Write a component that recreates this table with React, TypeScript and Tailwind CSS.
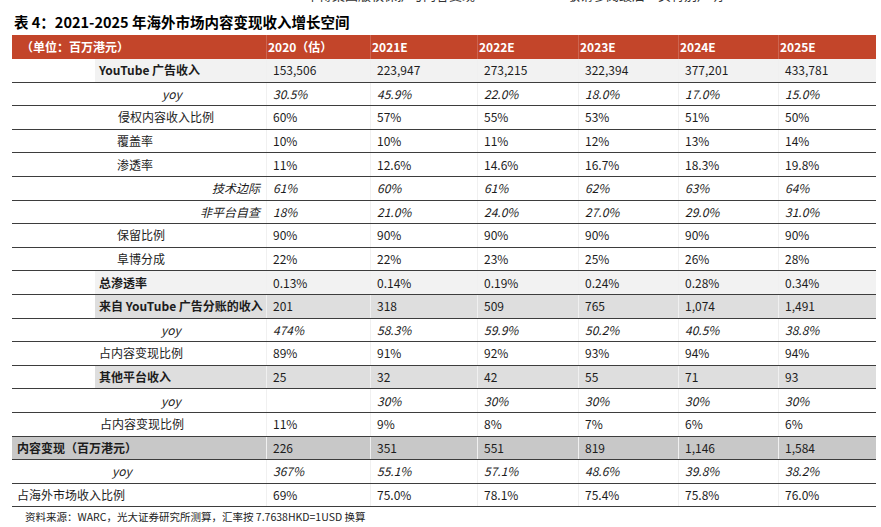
import React from 'react';
import clsx from 'clsx';

type RowData = {
  label: string;
  vals: string[];
  sub?: boolean; // label sits in the second sub-column, shaded from there
  full?: boolean; // shading runs across the whole row
  bg?: string;
  pl?: string;
  right?: boolean;
  bold?: boolean;
  italic?: boolean;
  italicVals?: boolean;
};

const years = ['2020（估）', '2021E', '2022E', '2023E', '2024E', '2025E'];
const colW = ['w-[104px]', 'w-[107px]', 'w-[101px]', 'w-[100px]', 'w-[100px]', 'w-[98px]'];

const rows: RowData[] = [
  { label: 'YouTube 广告收入', sub: true, bold: true, bg: 'bg-[#f2f2f2]', vals: ['153,506', '223,947', '273,215', '322,394', '377,201', '433,781'] },
  { label: 'yoy', pl: 'pl-[150px]', italic: true, italicVals: true, vals: ['30.5%', '45.9%', '22.0%', '18.0%', '17.0%', '15.0%'] },
  { label: '侵权内容收入比例', pl: 'pl-[106px]', vals: ['60%', '57%', '55%', '53%', '51%', '50%'] },
  { label: '覆盖率', pl: 'pl-[105px]', vals: ['10%', '10%', '11%', '12%', '13%', '14%'] },
  { label: '渗透率', pl: 'pl-[105px]', vals: ['11%', '12.6%', '14.6%', '16.7%', '18.3%', '19.8%'] },
  { label: '技术边际', right: true, italic: true, italicVals: true, vals: ['61%', '60%', '61%', '62%', '63%', '64%'] },
  { label: '非平台自查', right: true, italic: true, italicVals: true, vals: ['18%', '21.0%', '24.0%', '27.0%', '29.0%', '31.0%'] },
  { label: '保留比例', pl: 'pl-[105px]', vals: ['90%', '90%', '90%', '90%', '90%', '90%'] },
  { label: '阜博分成', pl: 'pl-[105px]', vals: ['22%', '22%', '23%', '25%', '26%', '28%'] },
  { label: '总渗透率', sub: true, bold: true, bg: 'bg-[#f2f2f2]', vals: ['0.13%', '0.14%', '0.19%', '0.24%', '0.28%', '0.34%'] },
  { label: '来自 YouTube 广告分账的收入', sub: true, bold: true, bg: 'bg-[#dedede]', vals: ['201', '318', '509', '765', '1,074', '1,491'] },
  { label: 'yoy', pl: 'pl-[149px]', italic: true, italicVals: true, vals: ['474%', '58.3%', '59.9%', '50.2%', '40.5%', '38.8%'] },
  { label: '占内容变现比例', pl: 'pl-[87px]', vals: ['89%', '91%', '92%', '93%', '94%', '94%'] },
  { label: '其他平台收入', sub: true, bold: true, bg: 'bg-[#dedede]', vals: ['25', '32', '42', '55', '71', '93'] },
  { label: 'yoy', pl: 'pl-[149px]', italic: true, italicVals: true, vals: ['', '30%', '30%', '30%', '30%', '30%'] },
  { label: '占内容变现比例', pl: 'pl-[88px]', vals: ['11%', '9%', '8%', '7%', '6%', '6%'] },
  { label: '内容变现（百万港元）', full: true, bold: true, pl: 'pl-[5px]', bg: 'bg-[#c8c8c8]', vals: ['226', '351', '551', '819', '1,146', '1,584'] },
  { label: 'yoy', pl: 'pl-[100px]', italic: true, italicVals: true, vals: ['367%', '55.1%', '57.1%', '48.6%', '39.8%', '38.2%'] },
  { label: '占海外市场收入比例', full: true, pl: 'pl-[5px]', vals: ['69%', '75.0%', '78.1%', '75.4%', '75.8%', '76.0%'] },
];

function Row({ r }: { r: RowData }) {
  return (
    <div className={clsx('flex h-[23.6px] border-b border-[#3d3d3d] whitespace-nowrap', r.full && r.bg)}>
      {r.sub ? (
        <div className="w-[254px] flex">
          <div className="w-[83px] bg-white" />
          <div className={clsx('flex-1 flex items-center pl-[4px] font-bold', r.bg)}>{r.label}</div>
        </div>
      ) : (
        <div
          className={clsx(
            'w-[254px] flex items-center',
            r.right ? 'justify-end pr-[6px]' : r.pl,
            r.bold && 'font-bold',
            r.italic && 'italic'
          )}
        >
          {r.label}
        </div>
      )}
      {r.vals.map((v, i) => (
        <div
          key={i}
          className={clsx(
            colW[i],
            'flex items-center pl-[6px] border-l border-[#f0f0f0]',
            r.sub && r.bg,
            r.italicVals && 'italic'
          )}
        >
          {v}
        </div>
      ))}
    </div>
  );
}

export default function App() {
  return (
    <div className="w-[881px] h-[527px] bg-white overflow-hidden font-['Noto_Sans_CJK_SC',sans-serif] text-[#1c1c1c]">
      {/* page header line, cut off by the crop */}
      <div className="h-[3px] overflow-hidden">
        <div className="-mt-[14px] flex text-[13px] leading-[17px] text-[#333]">
          <span className="ml-[306px]">阜博集团版权保护与内容变现</span>
          <span className="ml-[92px]">敬请参阅最后一页特别声明</span>
        </div>
      </div>

      <div className="mt-[9px] ml-[14px] h-[20px] flex items-center text-[14.5px] font-bold text-black">
        表 4：2021-2025 年海外市场内容变现收入增长空间
      </div>

      <div className="mt-[3px] ml-[12px] w-[864px] text-[12px]">
        <div className="flex h-[24px] bg-[#c3452a] text-white font-bold">
          <div className="w-[254px] flex items-center pl-[9px]">（单位：百万港元）</div>
          {years.map((y, i) => (
            <div key={y} className={clsx(colW[i], 'flex items-center pl-[1px] border-l border-[#cd6550]')}>
              {y}
            </div>
          ))}
        </div>
        {rows.map((r, i) => (
          <Row key={i} r={r} />
        ))}
      </div>

      <div className="mt-[3px] ml-[25px] text-[10.5px] leading-[14px] text-[#222]">
        资料来源：WARC，光大证券研究所测算，汇率按 7.7638HKD=1USD 换算
      </div>
    </div>
  );
}
